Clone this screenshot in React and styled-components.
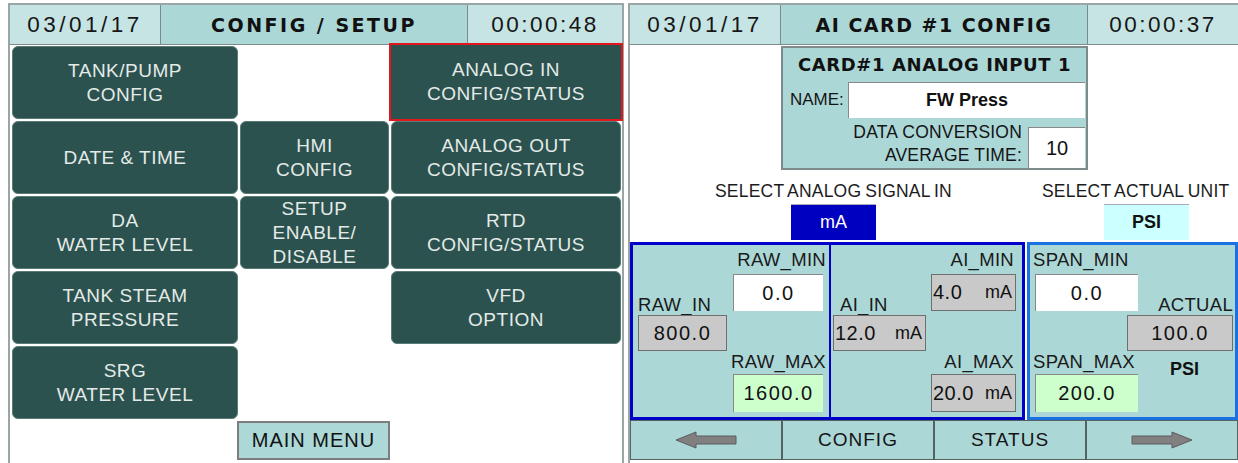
import React from 'react';
import styled, { createGlobalStyle, css } from 'styled-components';

const GlobalStyle = createGlobalStyle`
  html, body {
    margin: 0;
    padding: 0;
    background: #fff;
  }
  body {
    font-family: "Liberation Sans", Arial, sans-serif;
    color: #141414;
  }
  * {
    box-sizing: border-box;
  }
`;

const Screen = styled.div`
  display: flex;
  gap: 4px;
  width: 1238px;
  height: 463px;
  padding: 3px 0 0 8px;
  overflow: hidden;
  background: #fff;
`;

const Panel = styled.div`
  width: ${p => p.$w}px;
  height: 460px;
  display: flex;
  flex-direction: column;
  border-top: 2px solid #9aa6a6;
  border-left: 2px solid #9aa6a6;
  border-right: ${p => (p.$closed ? '2px solid #9aa6a6' : 'none')};
`;

const Header = styled.div`
  display: grid;
  grid-template-columns: ${p => p.$cols};
  height: 40px;
  border-bottom: 1px solid #7c8b8b;
`;

const HeadCell = styled.div`
  display: flex;
  align-items: center;
  justify-content: center;
  background: #c6e4e4;
  border-right: 1px solid #7c8b8b;
  font-size: 22.5px;
  letter-spacing: ${p => p.$ls || 2.5}px;
  color: #161616;

  &:last-child {
    border-right: 0;
  }
`;

const HeadTitle = styled(HeadCell)`
  background: #abd7d6;
  font-family: "DejaVu Sans", sans-serif;
  font-weight: bold;
  font-size: 19px;
  color: #111;
`;

/* ---------- left: config / setup menu ---------- */

const Menu = styled.div`
  display: grid;
  grid-template-columns: 229px 151px 232px;
  grid-template-rows: repeat(5, 75px) 40px;
`;

const MenuButton = styled.button`
  grid-column: ${p => p.$col};
  grid-row: ${p => p.$row};
  margin: ${p => (p.$col === 1 ? '1px 1px 1px 2px' : '1px')};
  padding: 0;
  background: #2b524e;
  color: #e4eae8;
  border: 1px solid #5b7b77;
  border-radius: 6px;
  font-family: "Liberation Sans", Arial, sans-serif;
  font-size: 19px;
  line-height: 24px;
  letter-spacing: 0.5px;
  text-align: center;

  ${p =>
    p.$selected &&
    css`
      margin: 0 1px 1px 1px;
      border-radius: 0;
      border-color: #2b524e;
      outline: 2px solid #e3161d;
    `}
`;

const MainMenu = styled.button`
  grid-column: 2;
  grid-row: 6;
  margin: 1px 0 0 -2px;
  padding: 0;
  background: #acd8d8;
  border: 2px solid #7d7d7d;
  color: #111;
  font-family: "Liberation Sans", Arial, sans-serif;
  font-size: 20px;
  letter-spacing: 1px;
`;

/* ---------- right: AI card config ---------- */

const CardRow = styled.div`
  display: grid;
  grid-template-columns: 151px 307px 150px;
  height: 125px;
`;

const Card = styled.div`
  grid-column: 2;
  margin-top: 1px;
  height: 124px;
  display: flex;
  flex-direction: column;
  padding: 0 1px 0 7px;
  background: #acd7d7;
  border: 2px solid #7d8b8b;
`;

const CardTitle = styled.div`
  height: 33px;
  display: flex;
  align-items: center;
  justify-content: center;
  margin-left: -6px;
  font-family: "DejaVu Sans", sans-serif;
  font-weight: bold;
  font-size: 18px;
  letter-spacing: 0.6px;
  color: #111;
`;

const NameRow = styled.div`
  height: 38px;
  display: flex;
  align-items: center;
`;

const NameLabel = styled.span`
  width: 58px;
  font-size: 17px;
`;

const TextField = styled.div`
  height: ${p => p.$h || 36}px;
  width: ${p => (p.$w ? `${p.$w}px` : 'auto')};
  flex: ${p => (p.$w ? 'none' : 1)};
  display: flex;
  align-items: center;
  justify-content: center;
  background: #fff;
  border-top: 1px solid #888;
  border-left: 1px solid #888;
  font-size: ${p => p.$size || 18}px;
  font-weight: ${p => (p.$bold ? 'bold' : 'normal')};
  color: #111;
`;

const ConvRow = styled.div`
  flex: 1;
  display: flex;
  justify-content: flex-end;
  align-items: flex-end;
`;

const ConvLabel = styled.div`
  margin: 0 6px 1px 0;
  text-align: right;
  font-size: 17.5px;
  line-height: 23px;
  letter-spacing: 0.2px;
`;

const SelectRow = styled.div`
  display: grid;
  grid-template-columns: 400px 208px;
  height: 72px;
`;

const SelectGroup = styled.div`
  display: flex;
  flex-direction: column;
  align-items: flex-start;
  padding: 11px 0 0 ${p => p.$indent}px;
  white-space: nowrap;
`;

const SelectLabel = styled.div`
  font-size: 17.5px;
  line-height: 20px;
  letter-spacing: 0.2px;
  word-spacing: -1px;
  color: #1c1c1c;
`;

const UnitButton = styled.div`
  width: 85px;
  height: 36px;
  margin: 3px 0 0 ${p => p.$offset}px;
  display: flex;
  align-items: center;
  justify-content: center;
  border-top: 1px solid #aab;
  font-size: 18px;
  ${p =>
    p.$active
      ? css`
          background: #0000c0;
          color: #fff;
        `
      : css`
          background: #ccffff;
          color: #111;
          font-weight: bold;
        `}
`;

const DataRow = styled.div`
  display: flex;
  gap: 2px;
  height: 178px;
`;

const Block = styled.div`
  display: flex;
  width: ${p => p.$w}px;
  background: #acd7d7;
  border: 3px solid ${p => p.$color};
`;

const Section = styled.div`
  display: grid;
  grid-template-columns: ${p => p.$cols};
  grid-template-rows: 26px 37px 1fr 24px 38px;
  width: ${p => p.$w}px;
  padding: 3px 0 5px;
  border-right: ${p => (p.$divider ? '2px solid #0000c8' : 'none')};
`;

const Label = styled.div`
  grid-column: ${p => p.$col};
  grid-row: ${p => p.$row};
  align-self: start;
  padding: ${p => p.$pad || '0'};
  text-align: ${p => p.$align || 'left'};
  font-size: 18.5px;
  line-height: 24px;
  letter-spacing: 0.3px;
  white-space: nowrap;
  color: #1a1a1a;
`;

const Stack = styled.div`
  grid-column: ${p => p.$col};
  grid-row: 1 / -1;
  display: flex;
  flex-direction: column;
  align-items: ${p => p.$align || 'flex-start'};
  padding-top: 47px;
`;

const StackLabel = styled.div`
  padding: ${p => p.$pad || '0'};
  font-size: 18.5px;
  line-height: 20px;
  letter-spacing: 0.3px;
  white-space: nowrap;
  color: #1a1a1a;
`;

const UnitLabel = styled.div`
  margin-top: 8px;
  padding-left: ${p => p.$pad}px;
  font-size: 18px;
  font-weight: bold;
  line-height: 20px;
  color: #111;
`;

const tones = {
  white: css`
    background: #fff;
    border-top: 1px solid #888;
    border-left: 1px solid #888;
  `,
  green: css`
    background: #ccffcc;
    border-top: 1px solid #888;
    border-left: 1px solid #888;
  `,
  grey: css`
    background: #c9c9c9;
    border: 1px solid #6f6f6f;
  `,
};

const Value = styled.div`
  grid-column: ${p => p.$col || 'auto'};
  grid-row: ${p => p.$row || 'auto'};
  width: ${p => p.$w}px;
  height: ${p => p.$h || 36}px;
  margin-left: ${p => p.$ml || 0}px;
  display: flex;
  align-items: center;
  justify-content: ${p => (p.$unit ? 'space-between' : 'center')};
  padding: ${p => (p.$unit ? '0 3px 0 1px' : '0')};
  font-size: 20px;
  letter-spacing: ${p => (p.$unit ? 0.5 : 1.5)}px;
  color: #111;
  ${p => tones[p.$tone]}
`;

const Unit = styled.span`
  font-size: 18px;
  letter-spacing: 0;
`;

const Nav = styled.div`
  display: grid;
  grid-template-columns: repeat(4, 1fr);
  height: 40px;
`;

const NavCell = styled.div`
  display: flex;
  align-items: center;
  justify-content: center;
  background: #acd7d7;
  border: 1px solid #56625f;
  font-size: 19px;
  letter-spacing: 1px;
  color: #141414;
`;

const ArrowSvg = styled.svg`
  transform: ${p => (p.$flip ? 'scaleX(-1)' : 'none')};
`;

const Arrow = ({ flip }) => (
  <ArrowSvg $flip={flip} width="62" height="18" viewBox="0 0 62 18">
    <polygon
      points="1,9 21,1 21,5 61,5 61,13 21,13 21,17"
      fill="#808080"
      stroke="#5c5c5c"
      strokeWidth="1"
      strokeLinejoin="round"
    />
  </ArrowSvg>
);

const menuItems = [
  { col: 1, row: 1, lines: ['TANK/PUMP', 'CONFIG'] },
  { col: 1, row: 2, lines: ['DATE & TIME'] },
  { col: 1, row: 3, lines: ['DA', 'WATER LEVEL'] },
  { col: 1, row: 4, lines: ['TANK STEAM', 'PRESSURE'] },
  { col: 1, row: 5, lines: ['SRG', 'WATER LEVEL'] },
  { col: 2, row: 2, lines: ['HMI', 'CONFIG'] },
  { col: 2, row: 3, lines: ['SETUP', 'ENABLE/', 'DISABLE'] },
  { col: 3, row: 1, lines: ['ANALOG IN', 'CONFIG/STATUS'], selected: true },
  { col: 3, row: 2, lines: ['ANALOG OUT', 'CONFIG/STATUS'] },
  { col: 3, row: 3, lines: ['RTD', 'CONFIG/STATUS'] },
  { col: 3, row: 4, lines: ['VFD', 'OPTION'] },
];

const App = () => {
  return (
    <>
      <GlobalStyle />
      <Screen>
        <Panel $w={616} $closed>
          <Header $cols="151px 307px 154px">
            <HeadCell $ls={3.5}>03/01/17</HeadCell>
            <HeadTitle>CONFIG / SETUP</HeadTitle>
            <HeadCell>00:00:48</HeadCell>
          </Header>
          <Menu>
            {menuItems.map(item => (
              <MenuButton
                key={item.lines.join('-')}
                $col={item.col}
                $row={item.row}
                $selected={item.selected}
              >
                {item.lines.map((line, i) => (
                  <React.Fragment key={line}>
                    {i > 0 && <br />}
                    {line}
                  </React.Fragment>
                ))}
              </MenuButton>
            ))}
            <MainMenu>MAIN MENU</MainMenu>
          </Menu>
        </Panel>

        <Panel $w={610}>
          <Header $cols="151px 307px 150px">
            <HeadCell $ls={3.5}>03/01/17</HeadCell>
            <HeadTitle style={{ letterSpacing: '1.5px' }}>AI CARD #1 CONFIG</HeadTitle>
            <HeadCell>00:00:37</HeadCell>
          </Header>

          <CardRow>
            <Card>
              <CardTitle>CARD#1 ANALOG INPUT 1</CardTitle>
              <NameRow>
                <NameLabel>NAME:</NameLabel>
                <TextField $bold>FW Press</TextField>
              </NameRow>
              <ConvRow>
                <ConvLabel>
                  DATA CONVERSION
                  <br />
                  AVERAGE TIME:
                </ConvLabel>
                <TextField $w={57} $h={41} $size={20}>10</TextField>
              </ConvRow>
            </Card>
          </CardRow>

          <SelectRow>
            <SelectGroup $indent={85}>
              <SelectLabel>SELECT ANALOG SIGNAL IN</SelectLabel>
              <UnitButton $active $offset={76}>mA</UnitButton>
            </SelectGroup>
            <SelectGroup $indent={12}>
              <SelectLabel>SELECT ACTUAL UNIT</SelectLabel>
              <UnitButton $offset={62}>PSI</UnitButton>
            </SelectGroup>
          </SelectRow>

          <DataRow>
            <Block $w={395} $color="#0000c8">
              <Section $w={198} $cols="98px 98px" $divider>
                <Stack $col={1}>
                  <StackLabel $pad="0 0 0 5px">RAW_IN</StackLabel>
                  <Value $tone="grey" $w={89} $ml={5}>800.0</Value>
                </Stack>
                <Label $col={2} $row={1} $align="right" $pad="0 3px 0 0">RAW_MIN</Label>
                <Value $col={2} $row={2} $tone="white" $w={90} $h={37} $ml={2}>0.0</Value>
                <Label $col={2} $row={4} $align="right" $pad="0 3px 0 0">RAW_MAX</Label>
                <Value $col={2} $row={5} $tone="green" $w={90} $h={38} $ml={2}>1600.0</Value>
              </Section>
              <Section $w={191} $cols="97px 94px">
                <Stack $col={1}>
                  <StackLabel $pad="0 0 0 9px">AI_IN</StackLabel>
                  <Value $tone="grey" $w={93} $ml={2} $unit>
                    12.0<Unit>mA</Unit>
                  </Value>
                </Stack>
                <Label $col={2} $row={1} $align="right" $pad="0 8px 0 0">AI_MIN</Label>
                <Value $col={2} $row={2} $tone="grey" $w={85} $h={37} $ml={3} $unit>
                  4.0<Unit>mA</Unit>
                </Value>
                <Label $col={2} $row={4} $align="right" $pad="0 8px 0 0">AI_MAX</Label>
                <Value $col={2} $row={5} $tone="grey" $w={85} $h={38} $ml={3} $unit>
                  20.0<Unit>mA</Unit>
                </Value>
              </Section>
            </Block>
            <Block $w={211} $color="#1a72e0">
              <Section $w={205} $cols="97px 108px">
                <Label $col={1} $row={1} $pad="0 0 0 3px">SPAN_MIN</Label>
                <Value $col={1} $row={2} $tone="white" $w={103} $h={37} $ml={5}>0.0</Value>
                <Label $col={1} $row={4} $pad="0 0 0 3px">SPAN_MAX</Label>
                <Value $col={1} $row={5} $tone="green" $w={103} $h={38} $ml={5}>200.0</Value>
                <Stack $col={2} $align="stretch">
                  <StackLabel style={{ textAlign: 'right' }} $pad="0 2px 0 0">ACTUAL</StackLabel>
                  <Value $tone="grey" $w={106}>100.0</Value>
                  <UnitLabel $pad={43}>PSI</UnitLabel>
                </Stack>
              </Section>
            </Block>
          </DataRow>

          <Nav>
            <NavCell>
              <Arrow />
            </NavCell>
            <NavCell>CONFIG</NavCell>
            <NavCell>STATUS</NavCell>
            <NavCell>
              <Arrow flip />
            </NavCell>
          </Nav>
        </Panel>
      </Screen>
    </>
  );
};

export default App;
